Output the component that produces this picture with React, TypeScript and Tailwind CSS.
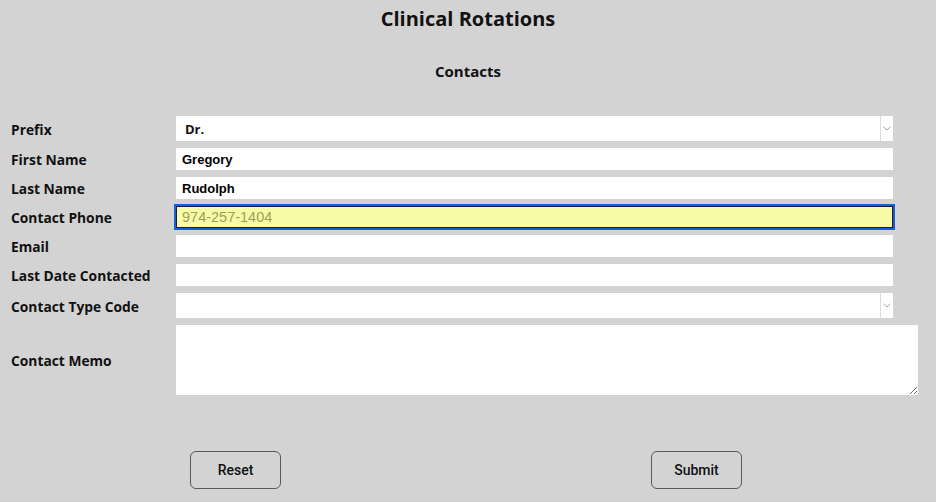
import React from 'react';

const labelFont = "font-['Open_Sans','Noto_Sans',sans-serif]";

function Chevron() {
  return (
    <svg width="8" height="5" viewBox="0 0 8 5" className="text-[#a0a0a0]">
      <path d="M0.5 0.8 L4 4 L7.5 0.8" fill="none" stroke="currentColor" strokeWidth="1" />
    </svg>
  );
}

function FakeSelect({ value }: { value?: string }) {
  return (
    <div className="w-[717px] h-[25px] bg-white flex items-center">
      <span className={`flex-1 pl-[9px] pt-[1px] text-[13px] leading-[18px] font-bold text-[#111] ${labelFont}`}>{value}</span>
      <div className="w-[13px] h-full border-l border-[#dcdcdc] flex items-center justify-center">
        <Chevron />
      </div>
    </div>
  );
}

function TextInput({ value, placeholder, focused }: { value?: string; placeholder?: string; focused?: boolean }) {
  return (
    <input
      readOnly
      defaultValue={value}
      placeholder={placeholder}
      className={`w-[717px] h-[22px] px-[6px] text-[13px] font-bold text-black font-['Liberation_Sans',Arial,sans-serif] ${
        focused
          ? 'bg-[#f8fba6] outline-2 outline-solid outline-[#1560d4] shadow-[inset_0_0_0_1px_#1a1a40] placeholder:text-[#9e9e58] placeholder:font-normal placeholder:text-[14.5px]'
          : 'bg-white outline-none'
      }`}
    />
  );
}

const rows: { label: string; field: React.ReactNode }[] = [
  { label: 'Prefix', field: <FakeSelect value="Dr." /> },
  { label: 'First Name', field: <TextInput value="Gregory" /> },
  { label: 'Last Name', field: <TextInput value="Rudolph" /> },
  { label: 'Contact Phone', field: <TextInput placeholder="974-257-1404" focused /> },
  { label: 'Email', field: <TextInput /> },
  { label: 'Last Date Contacted', field: <TextInput /> },
  { label: 'Contact Type Code', field: <FakeSelect /> },
];

export default function App() {
  return (
    <div className="w-[936px] h-[502px] bg-[#d3d3d3] text-[#111] overflow-hidden">
      {/* Headings */}
      <h1 className={`pt-[7px] text-center text-[20px] leading-[24px] font-bold ${labelFont}`}>Clinical Rotations</h1>
      <h2 className={`mt-[30px] text-center text-[15px] leading-[20px] font-bold ${labelFont}`}>Contacts</h2>

      {/* Form */}
      <div className="mt-[35px] flex flex-col gap-[7px]">
        {rows.map((r) => (
          <div key={r.label} className="flex items-center">
            <label className={`w-[176px] pl-[11px] pt-[2px] text-[13.8px] leading-[18px] font-bold ${labelFont}`}>{r.label}</label>
            {r.field}
          </div>
        ))}
        <div className="flex items-center">
          <label className={`w-[176px] pl-[11px] pt-[1px] text-[13.8px] leading-[18px] font-bold ${labelFont}`}>Contact Memo</label>
          <textarea className="w-[742px] h-[70px] bg-white outline-none" />
        </div>
      </div>

      {/* Buttons */}
      <div className="mt-[56px] flex">
        <button className="ml-[190px] w-[91px] h-[38px] rounded-[6px] border border-[#5a5a5a] text-[14px] font-medium text-[#111] font-['Roboto',sans-serif]">
          Reset
        </button>
        <button className="ml-[370px] w-[91px] h-[38px] rounded-[6px] border border-[#5a5a5a] text-[14px] font-medium text-[#111] font-['Roboto',sans-serif]">
          Submit
        </button>
      </div>
    </div>
  );
}
